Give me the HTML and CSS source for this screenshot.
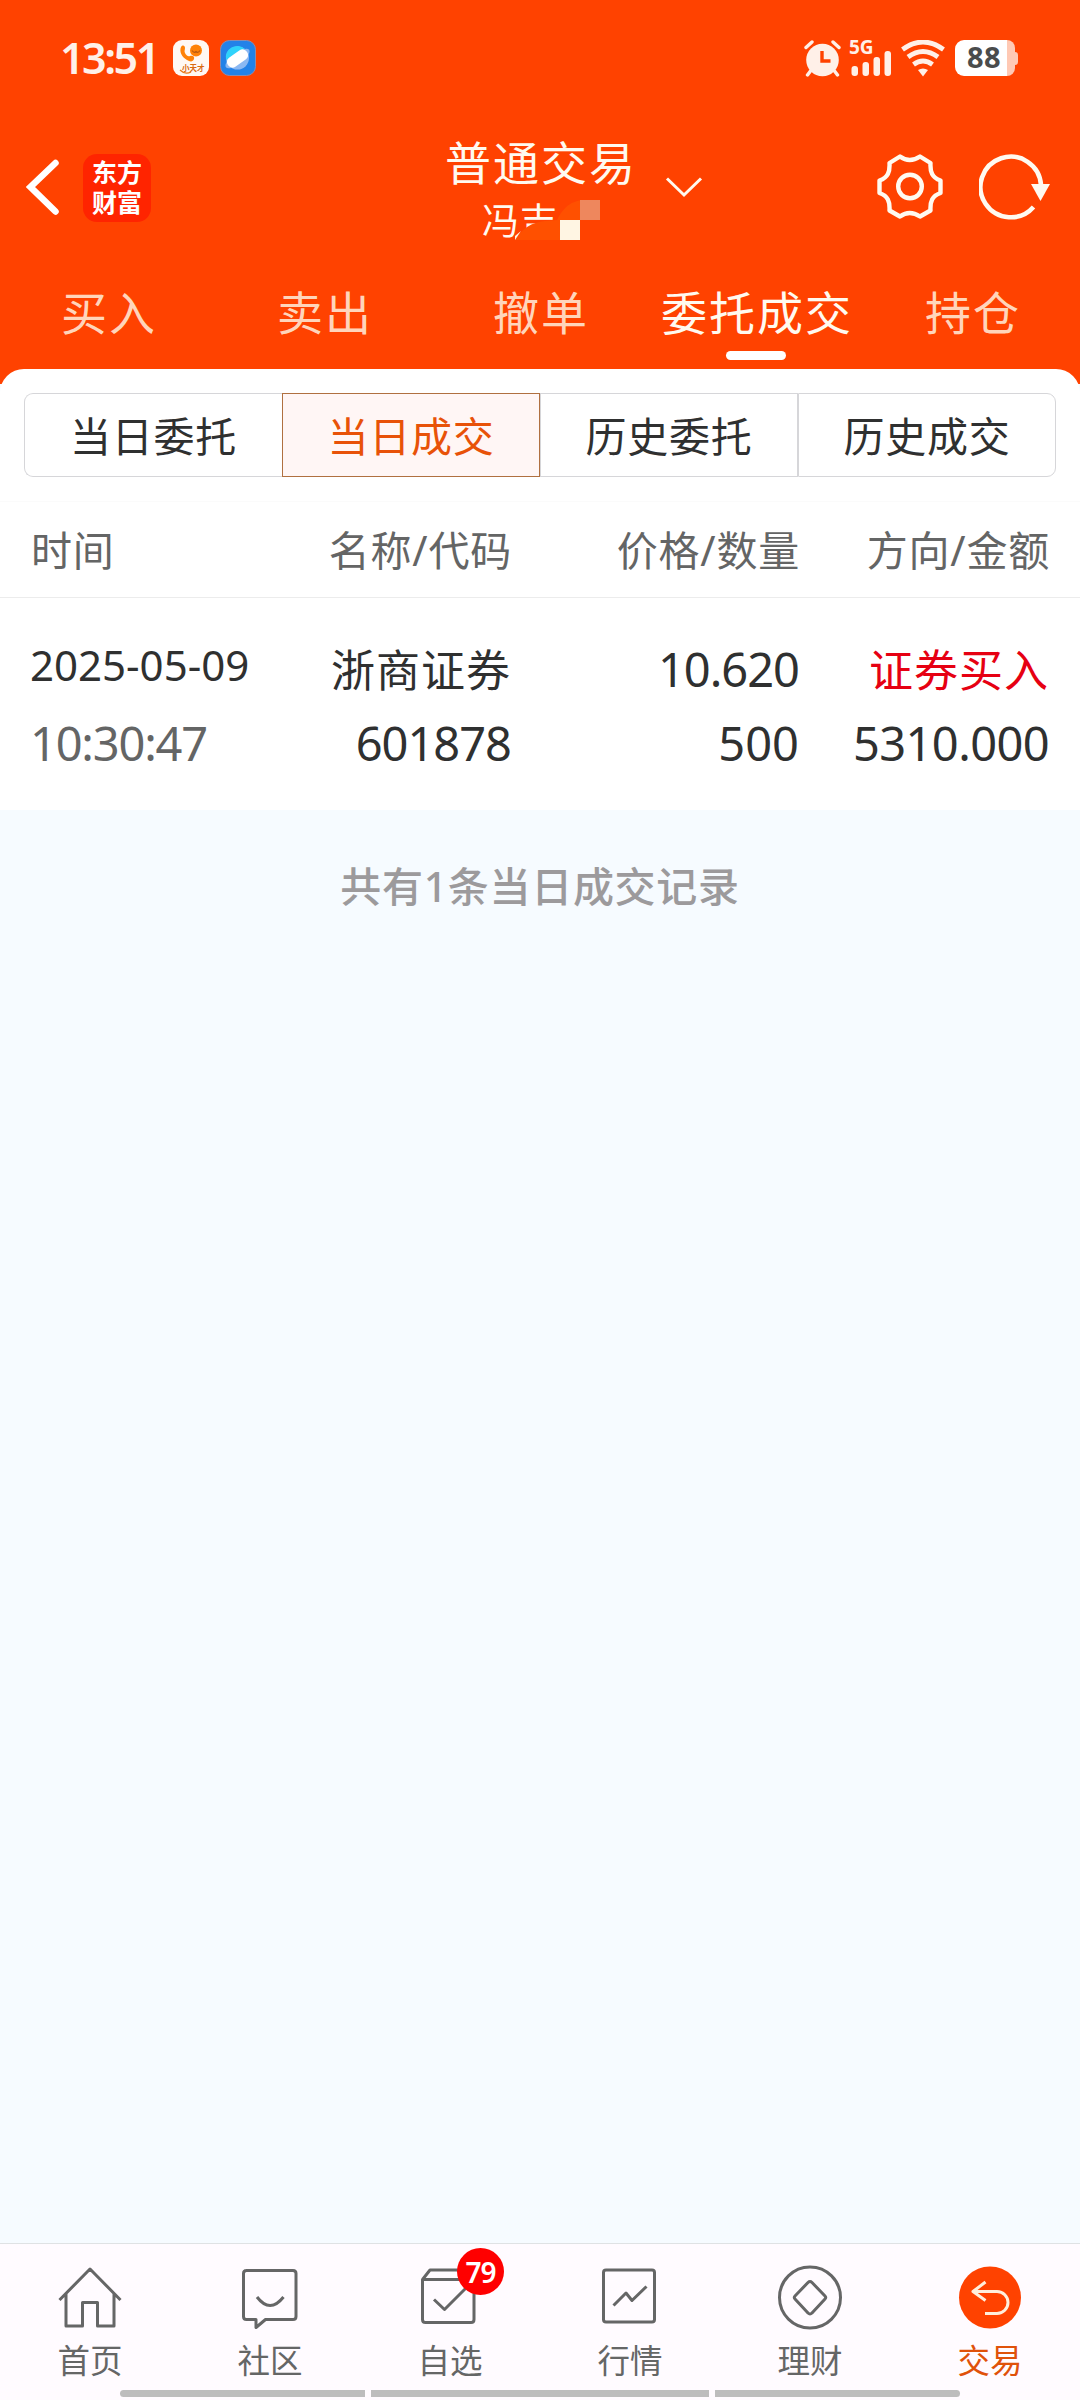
FILE: index.html
```html
<!DOCTYPE html>
<html lang="zh-CN">
<head>
<meta charset="utf-8">
<title>普通交易</title>
<link rel="stylesheet" href="styles.css">
</head>
<body>
<div class="app">
  <header class="header">
    <div class="status">
      <span class="clock">13:51</span>
      <svg class="app-icon" width="36" height="36" viewBox="0 0 36 36">
        <rect width="36" height="36" rx="9" fill="#fff8f4"/>
        <path d="M8 7c2-3 4-1 4 1s-1 3 0 5 3 4 5 3 5 0 4 3-4 3-7 1C9 17 6 12 8 7z" fill="#ff8208"/>
        <circle cx="23" cy="10.500" r="6" fill="#ff8208"/>
        <path d="M19 10.500q2 3 4 1 2 2 4-1" fill="none" stroke="#b85a10" stroke-width="1.200"/>
        <path d="M7 30q5 5 11 2" fill="none" stroke="#e8781a" stroke-width="1.200"/>
        <text x="9" y="30.500" class="app-name">小天才</text>
      </svg>
      <svg class="app-icon" width="36" height="36" viewBox="0 0 36 36">
        <rect x=".5" y=".5" width="35" height="35" rx="9" fill="#2382e8" stroke="#8a8cb0"/>
        <circle cx="17.500" cy="18" r="11.500" fill="#8bb8f2"/>
        <path d="M6 20A11.500 11.500 0 0 1 25 9z" fill="#2fd3fb"/>
        <ellipse cx="17.500" cy="18.500" rx="14.500" ry="5.500" transform="rotate(-37 17.500 18.500)" fill="#8bb8f2"/>
        <rect x="6" y="13" width="23" height="11" rx="5" transform="rotate(-35 17.500 18.500)" fill="#fff"/>
      </svg>
      <span class="status-gap"></span>
      <svg class="alarm" width="37" height="37" viewBox="0 0 37 37" fill="none" stroke="#fff0e8">
        <circle cx="18.500" cy="20" r="16.300" fill="#fff0e8" stroke="none"/>
        <path d="M2 7.500L8 2M29 2l6 5.500M6.500 31l-3 4M30.500 31l3 4" stroke-width="3.400" stroke-linecap="round"/>
        <path d="M18 11v10h8.500" stroke="#ff4200" stroke-width="3.400"/>
      </svg>
      <span class="signal">
        <span class="net">5G</span>
        <svg width="41" height="36" viewBox="0 0 41 36" fill="#fff0e8">
          <rect x="1.500" y="26" width="6.500" height="10" rx="3"/><rect x="12.500" y="22" width="6.500" height="14" rx="3"/><rect x="23.500" y="17" width="6.500" height="19" rx="3"/><rect x="34.500" y="11" width="6.500" height="25" rx="3"/>
        </svg>
      </span>
      <svg class="wifi" width="44" height="37" viewBox="0 0 44 37" fill="none" stroke="#fff0e8" stroke-width="4.800">
        <path d="M1.500 9.500Q22-5.500 42.500 9.500M7 17Q22 6 37 17M12.500 24.500Q22 17.500 31.500 24.500"/>
        <path d="M17 30q5-3 10 0l-5 6.500z" fill="#fff0e8" stroke="none"/>
      </svg>
      <span class="battery"><span class="level">88</span><span class="tip"></span></span>
    </div>

    <div class="titlebar">
      <svg class="back" width="34" height="58" viewBox="0 0 34 58" fill="none" stroke="#fff" stroke-width="6.500" stroke-linecap="round"><path d="M29.500 5L4.500 29l25 24.500"/></svg>
      <div class="brand"><span>东方</span><span>财富</span></div>
      <div class="account">
        <div class="title">普通交易</div>
        <div class="owner">冯吉
          <svg class="mask" width="86" height="40" viewBox="0 0 86 40">
            <path d="M0 40Q10 23 30 21l12-1Q51 1 68 0v40z" fill="#ff5000"/>
            <path d="M0 40v-4l6-5Z" fill="#fff3df"/>
            <rect x="45" y="20" width="20" height="20" fill="#fff5e3"/>
            <rect x="65" y="0" width="20" height="20" fill="#ee875d"/>
            <rect x="65" y="20" width="20" height="20" fill="#ff4200"/>
          </svg>
        </div>
      </div>
      <svg class="chevron" width="38" height="22" viewBox="0 0 38 22" fill="none" stroke="#fffaf0" stroke-width="3"><path d="M2 2.500l17 16.500 17-16.500"/></svg>
      <svg class="gear" width="66" height="66" viewBox="0 0 66 66" fill="none" stroke="#fffaf0" stroke-width="4.400" stroke-linejoin="round">
        <path d="M23 2.500Q32.500 9.500 43 2.500L53.500 9C53 18 55 23.500 63.500 26.500V39C55 42 53 47.500 53.500 56.500L43 62.500Q32.500 55.500 23 62.500L12.500 56.500C13 47.500 11 42 2.500 39V26.500C11 23.500 13 18 12.500 9Z"/>
        <circle cx="33" cy="32.500" r="11.800"/>
      </svg>
      <svg class="refresh" width="72" height="66" viewBox="0 0 72 66" fill="none" stroke="#fffaf0" stroke-width="4.600">
        <path d="M54.500 53A30.300 30.300 0 1 1 62 31"/>
        <path d="M52 30h19L61.500 47z" fill="#fffaf0" stroke="none"/>
      </svg>
    </div>

    <nav class="tabs">
      <a>买入</a><a>卖出</a><a>撤单</a><a class="on">委托成交</a><a>持仓</a>
    </nav>
  </header>

  <main class="panel">
    <div class="segments">
      <span>当日委托</span><span class="on">当日成交</span><span>历史委托</span><span>历史成交</span>
    </div>
    <div class="row head">
      <span>时间</span><span>名称/代码</span><span>价格/数量</span><span>方向/金额</span>
    </div>
    <div class="row record">
      <div><span class="date">2025-05-09</span><span class="time">10:30:47</span></div>
      <div><span class="zh">浙商证券</span><span class="num">601878</span></div>
      <div><span class="num">10.620</span><span class="num wide">500</span></div>
      <div><span class="zh buy">证券买入</span><span class="num amount">5310.000</span></div>
    </div>
  </main>
  <p class="count">共有1条当日成交记录</p>

  <footer class="dock">
    <a><svg width="66" height="66" viewBox="0 0 66 66"><path d="M2.500 36L33 5l30.500 31M9 30v32h16.500V38.500h15V62H57V30"/></svg>首页</a>
    <a><svg width="66" height="66" viewBox="0 0 66 66"><path d="M9 6.500h47q3 0 3 3v43q0 3-3 3H28.500L19 63.500v-8h-9.500q-3 0-3-3v-43q0-3 3-3z"/><path d="M20 33q13 17 26.500 0"/></svg>社区</a>
    <a><svg width="66" height="66" viewBox="0 0 66 66"><path d="M5.500 15.500h51.500v40q0 3-3 3H8.500q-3 0-3-3zL13 6h38l6 9.500M17 35.500l10.500 10L49 24"/></svg>自选<b class="badge">79</b></a>
    <a><svg width="66" height="66" viewBox="0 0 66 66"><rect x="6.500" y="6" width="51" height="52" rx="2.500"/><path d="M16.500 41.500L29 29l6 7.500 14.500-14"/></svg>行情</a>
    <a><svg width="66" height="66" viewBox="0 0 66 66"><circle cx="33" cy="33.500" r="30.500"/><path d="M31 18.500q2-2 4 0L48 32q1.500 1.500 0 3L35 49q-2 2-4 0L18 35q-1.500-1.500 0-3z"/></svg>理财</a>
    <a class="on"><svg width="66" height="66" viewBox="0 0 66 66"><circle cx="33" cy="33.500" r="31" class="disc"/><path class="arrow" d="M28.500 18L16 27.500l12.500 9M16 27.500h24a11 11 0 0 1 0 22H28"/></svg>交易</a>
    <div class="homebar"><i></i><i></i><i></i></div>
  </footer>
</div>
</body>
</html>
```
FILE: styles.css
```css
* { box-sizing: border-box; }
body {
  margin: 0;
  font-family: "Noto Sans", "Noto Sans CJK SC", sans-serif;
  color: #2f3030;
}
svg { display: block; flex: none; }
.app {
  width: 1080px;
  height: 2400px;
  display: flex;
  flex-direction: column;
  background: #f6fbff;
  overflow: hidden;
}

/* header */
.header { height: 384px; flex: none; background: #ff4200; color: #fffaf0; }
.status {
  height: 116px;
  padding: 0 60px;
  display: flex;
  align-items: center;
  color: #fff0e8;
}
.clock { width: 113px; font-size: 43px; font-weight: 600; line-height: 44px; letter-spacing: -2.5px; }
.app-icon { margin-right: 11px; }
.app-name { font-size: 7.500px; font-weight: 700; fill: #d9690f; }
.status-gap { flex: 1; }
.alarm { margin-right: 9px; }
.signal { position: relative; margin-right: 10px; }
.net { position: absolute; left: -1px; top: -2px; font-size: 19px; font-weight: 700; line-height: 18px; }
.wifi { margin-right: 10px; }
.battery { display: flex; align-items: center; width: 65px; }
.level {
  width: 52px; height: 36px; padding-left: 6px;
  border-radius: 9px 0 0 9px;
  background: #fff; color: #4a4c4c;
  font-size: 29px; font-weight: 700; line-height: 34px; text-align: center;
  letter-spacing: .5px;
}
.tip { width: 8px; height: 36px; border-radius: 0 8px 8px 0; background: #ffc9b4; }
.battery::after { content: ""; width: 3px; height: 13px; border-radius: 0 3px 3px 0; background: #ffc9b4; }

.titlebar { height: 142px; display: flex; align-items: flex-start; padding: 14px 0 0 26px; }
.back { margin-top: 28px; }
.brand {
  width: 68px; height: 68px; margin: 24px 0 0 23px; padding-top: 3px;
  border-radius: 14px; background: #ff2400; color: #fff;
  display: flex; flex-direction: column; align-items: center;
  font-size: 25px; font-weight: 700; line-height: 30px;
}
.account { width: 190px; margin-left: 294px; display: flex; flex-direction: column; }
.title { font-size: 46px; line-height: 65px; letter-spacing: 2px; white-space: nowrap; }
.owner { position: relative; padding-left: 37px; font-size: 37px; line-height: 51px; letter-spacing: 1px; }
.mask { position: absolute; left: 70px; top: 5px; }
.chevron { margin: 46px 0 0 30px; }
.gear { margin: 24px 0 0 174px; }
.refresh { margin: 24px 0 0 36px; }

.tabs {
  height: 111px;
  display: grid;
  grid-template-columns: repeat(5, 216px);
  color: #ffd5bb;
  font-size: 46px; line-height: 109px; letter-spacing: 2px;
  text-align: center;
}
.tabs a { padding-left: 2px; }
.tabs .on { position: relative; color: #fffaf0; }
.tabs .on::after {
  content: ""; position: absolute; left: 78px; top: 93px;
  width: 60px; height: 9px; border-radius: 5px; background: #fff;
}

/* orders */
.panel { height: 441px; flex: none; margin-top: -15px; background: #fff; border-radius: 24px 24px 0 0; }
.panel { clip-path: inset(0); }
.segments {
  height: 84px; margin: 0 24px; position: relative; top: 24px;
  display: grid; grid-template-columns: repeat(4, 258px);
  font-size: 41px; letter-spacing: .8px; text-align: center;
}
.segments span { height: 84px; border: 1px solid #d6d6d9; line-height: 84px; }
.segments span:first-child { border-radius: 9px 0 0 9px; border-right: 0; }
.segments span:last-child { border-radius: 0 9px 9px 0; }
.segments .on { border-color: #b07040; background: #fff6f5; color: #e85208; }
.row { display: grid; grid-template-columns: 240px 241px 288px 250px; padding: 0 30px; }
.row > * { text-align: right; }
.row > :first-child { text-align: left; }
.head {
  height: 97px; margin-top: 48px;
  border-top: 1px solid #fbfbfb; border-bottom: 1px solid #ececec;
  font-size: 41px; line-height: 96px; letter-spacing: .8px; color: #646565;
}
.head span { position: relative; left: 1px; }
.record { padding-top: 35px; }
.record span { display: block; height: 74px; line-height: 74px; }
.record .date { font-size: 42px; line-height: 64px; }
.record .time { font-size: 47px; line-height: 72px; letter-spacing: -1.200px; color: #646565; }
.record .num { font-size: 47px; line-height: 72px; letter-spacing: -1px; }
.record .wide { letter-spacing: 0; }
.record .amount { letter-spacing: -.6px; }
.record .zh { font-size: 44px; letter-spacing: 1px; }
.record .buy { color: #e60012; }
.count {
  margin: 0; flex: 1; padding-top: 43px;
  font-size: 41px; line-height: 66px; letter-spacing: .7px; font-weight: 500;
  color: #9c9a9c; text-align: center;
}

/* bottom navigation */
.dock {
  position: relative;
  height: 157px; flex: none;
  display: grid; grid-template-columns: repeat(6, 180px);
  border-top: 1px solid #dfe2e4; background: #fffbff;
  color: #656666; font-size: 32.500px;
}
.dock a { position: relative; display: flex; flex-direction: column; align-items: center; padding-top: 20px; line-height: 62px; }
.dock svg { fill: none; stroke: currentColor; stroke-width: 3; stroke-linejoin: round; }
.dock .on { color: #e0520a; }
.dock .disc { fill: #ff4200; stroke: none; }
.dock .arrow { stroke: #ffefdc; }
.badge {
  position: absolute; left: 97px; top: 4px;
  width: 47px; height: 47px; border-radius: 50%;
  background: #f00; color: #fff;
  font-size: 28px; font-weight: 600; line-height: 48px; text-align: center; letter-spacing: -1px;
}
.homebar { position: absolute; left: 120px; bottom: 3px; width: 840px; display: flex; justify-content: space-between; }
.homebar i { width: 245px; height: 7px; background: #bdbdbd; border-radius: 4px 0 0 4px; }
.homebar i:nth-child(2) { width: 338px; border-radius: 0; }
.homebar i:last-child { border-radius: 0 4px 4px 0; }
```
